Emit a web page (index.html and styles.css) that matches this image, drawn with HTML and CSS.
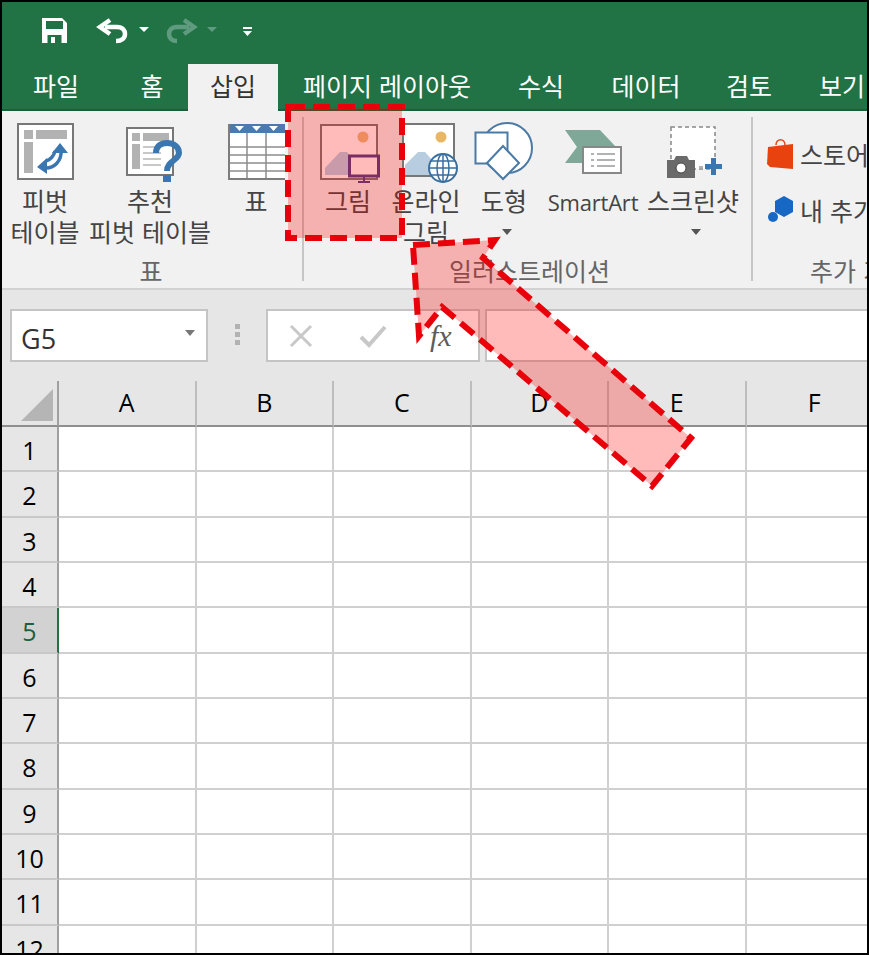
FILE: index.html
```html
<!DOCTYPE html>
<html lang="ko">
<head>
<meta charset="utf-8">
<title>Excel 삽입 탭</title>
<link rel="stylesheet" href="styles.css">
</head>
<body>
<div class="page">
<div class="frame">
  <div class="qat">
    <svg class="qat-icons" viewBox="2 2 300 62" width="300" height="62">
      <path d="M42 18H62L67 23V43H42Z" fill="#fff"/>
      <rect x="46" y="21" width="17" height="8" fill="#217346"/>
      <rect x="47.500" y="35" width="14" height="8" fill="#217346"/>
      <rect x="51" y="37" width="4" height="6" fill="#fff"/>
      <path d="M105 27H117C123 27 125 31 125 34C125 38 122 41 116 41" fill="none" stroke="#fff" stroke-width="4.500"/>
      <path d="M110 20L100 27L110 34" fill="none" stroke="#fff" stroke-width="4.500"/>
      <path d="M139 27H149L144 32Z" fill="#fff"/>
      <path d="M189 27H177C171 27 169 31 169 34C169 38 172 41 177 41" fill="none" stroke="#5f9b7e" stroke-width="4.500"/>
      <path d="M184 20L194 27L184 34" fill="none" stroke="#5f9b7e" stroke-width="4.500"/>
      <path d="M207 27H217L212 32Z" fill="#5f9b7e"/>
      <path d="M243 27H252V29H243ZM243 31H252L247.500 36Z" fill="#fff"/>
    </svg>
  </div>
  <div class="tabs">
    <div class="tab tab-file">파일</div>
    <div class="tab tab-home">홈</div>
    <div class="tab tab-insert">삽입</div>
    <div class="tab tab-layout">페이지 레이아웃</div>
    <div class="tab tab-formula">수식</div>
    <div class="tab tab-data">데이터</div>
    <div class="tab tab-review">검토</div>
    <div class="tab tab-view">보기</div>
  </div>
  <div class="ribbon">
    <div class="group group-table">
      <div class="btns">
        <div class="btn btn-pivot">
          <svg viewBox="10 120 70 64" width="70" height="64">
            <rect x="18" y="124" width="55" height="55" fill="#fff" stroke="#777" stroke-width="2"/>
            <path d="M24 130h9v9h-9zM36 130h31v9H36zM24 142h9v31h-9z" fill="#b2b2b2"/>
            <path d="M44 168C54 169 62 161 61 150M46 161C50 160 54 156 55 151" fill="none" stroke="#3a77b0" stroke-width="3.500"/>
            <path d="M52 153L60 143L68 153ZM47 158L37 167L47 174Z" fill="#3a77b0"/>
          </svg>
          <div class="label">피벗<br>테이블</div>
        </div>
        <div class="btn btn-rec">
          <svg viewBox="80 120 140 64" width="140" height="64">
            <rect x="127" y="128" width="46" height="47" fill="#fff" stroke="#777" stroke-width="2"/>
            <path d="M132 133h8v8h-8zM143 133h26v8h-26zM132 144h8v25h-8z" fill="#b2b2b2"/>
            <path d="M143 147h18M143 153h18M143 159h18M143 165h18" stroke="#c8c8c8" stroke-width="2"/>
            <path d="M156 153C156 146 161 143 167 143C174 143 179 147 179 153C179 160 167 161 167 171" fill="none" stroke="#3a77b0" stroke-width="6"/>
            <rect x="163" y="175" width="8" height="7" fill="#3a77b0"/>
          </svg>
          <div class="label">추천<br>피벗 테이블</div>
        </div>
        <div class="btn btn-tbl">
          <svg viewBox="220 120 72 64" width="72" height="64">
            <path d="M229 125H285V179H229Z" fill="#fff"/>
            <path d="M228 124h57v9h-57z" fill="#4a7ab0"/>
            <path d="M235 126h9l-4.500 5zM252 126h9l-4.500 5zM269 126h9l-4.500 5z" fill="#fff"/>
            <path d="M229 147h56M229 155h56M229 163h56M229 171h56M247 133v46M266 133v46" stroke="#8d8d8d" stroke-width="1.500"/>
            <path d="M285 179H229V124" fill="none" stroke="#7d7d7d" stroke-width="2"/>
          </svg>
          <div class="label">표</div>
        </div>
      </div>
      <div class="glabel glabel-table">표</div>
    </div>
    <div class="group group-illus">
      <div class="btns">
        <div class="btn btn-pic">
          <svg viewBox="308 120 80 64" width="80" height="64">
            <rect x="321" y="125" width="56" height="54" fill="#fff" stroke="#777" stroke-width="2"/>
            <circle cx="363" cy="137" r="5.500" fill="#e8c080"/>
            <path d="M325 175V168L340 152H347L359 167V175Z" fill="#b5d5ea"/>
            <rect x="349.500" y="156" width="29" height="20" fill="#fff" stroke="#4a3f8a" stroke-width="3"/>
            <path d="M364 177v4M358 182h12" stroke="#4a3f8a" stroke-width="2"/>
          </svg>
          <div class="label">그림</div>
        </div>
        <div class="btn btn-online">
          <svg viewBox="388 120 76 64" width="76" height="64">
            <rect x="403" y="124" width="51" height="52" fill="#fff" stroke="#777" stroke-width="2"/>
            <circle cx="441" cy="137" r="5.500" fill="#e8b765"/>
            <path d="M405 175V165L418 152H425L441 170V175Z" fill="#b8cde0"/>
            <circle cx="443" cy="168" r="14" fill="#fff" stroke="#3a6f9e" stroke-width="2"/>
            <ellipse cx="443" cy="168" rx="6" ry="14" fill="none" stroke="#3a6f9e" stroke-width="1.500"/>
            <path d="M443 154v28M429 168h28M431 161h24M431 175h24" stroke="#3a6f9e" stroke-width="1.500"/>
          </svg>
          <div class="label">온라인<br>그림</div>
        </div>
        <div class="btn btn-shape">
          <svg viewBox="464 120 80 64" width="80" height="64">
            <circle cx="507" cy="148" r="25" fill="#fff" stroke="#4a7aa5" stroke-width="2"/>
            <rect x="475.500" y="132.500" width="32" height="31" fill="#fff" stroke="#4a7aa5" stroke-width="2"/>
            <path d="M503 146L519 163L503 179L487 163Z" fill="#fff" stroke="#4a7aa5" stroke-width="2"/>
          </svg>
          <div class="label">도형</div>
          <div class="caret-line"><span class="caret"></span></div>
        </div>
        <div class="btn btn-smart">
          <svg viewBox="544 120 98 64" width="98" height="64">
            <path d="M565 130H600L616 147H583V163H565L577 147Z" fill="#7fa898"/>
            <rect x="583" y="147" width="38" height="26" fill="#fff" stroke="#888" stroke-width="2"/>
            <path d="M591 154h3M591 160h3M591 166h3M597 154h18M597 160h18M597 166h18" stroke="#999" stroke-width="1.500"/>
          </svg>
          <div class="label latin">SmartArt</div>
        </div>
        <div class="btn btn-shot">
          <svg viewBox="642 120 102 64" width="102" height="64">
            <rect x="671" y="127" width="44" height="42" fill="#fff" stroke="#888" stroke-width="1.500" stroke-dasharray="4 3"/>
            <path d="M667 160H674L676 156H687L689 160H695V178H667Z" fill="#6a6a6a"/>
            <circle cx="681" cy="168" r="5" fill="#fff" stroke="#444" stroke-width="1"/>
            <path d="M699 167h4" stroke="#999" stroke-width="1.500"/>
            <path d="M705 164h6v-6h5v6h6v5h-6v6h-5v-6h-6z" fill="#3a77b0"/>
          </svg>
          <div class="label">스크린샷</div>
          <div class="caret-line"><span class="caret"></span></div>
        </div>
      </div>
      <div class="glabel">일러스트레이션</div>
    </div>
    <div class="group group-addin">
      <div class="addin-list">
        <div class="addin">
          <svg viewBox="0 0 27 34" width="27" height="34">
            <path d="M9 8C9 1 18 1 18 8" fill="none" stroke="#e8430f" stroke-width="1.500"/>
            <path d="M1 10L26 7V32L3 30L0 27Z" fill="#e8430f"/>
          </svg>
          <span>스토어</span>
        </div>
        <div class="addin">
          <svg viewBox="0 0 27 34" width="27" height="34">
            <path d="M17 3L26 8V19L17 24L8 19V8Z" fill="#1668c4"/>
            <circle cx="6" cy="24" r="5" fill="#1668c4"/>
          </svg>
          <span>내 추가 기능</span>
        </div>
      </div>
      <div class="glabel glabel-addin">추가 기능</div>
    </div>
  </div>
  <div class="fbar">
    <div class="namebox"><span class="name">G5</span><i class="caret caret-name"></i></div>
    <div class="grip"><b></b><b></b><b></b></div>
    <div class="fbuttons">
      <svg class="fx-x" viewBox="0 0 26 26" width="26" height="26"><path d="M3 3L23 23M23 3L3 23" stroke="#c8c8c8" stroke-width="3"/></svg>
      <svg class="fx-ok" viewBox="0 0 28 26" width="28" height="26"><path d="M2 14L10 22L26 4" fill="none" stroke="#c8c8c8" stroke-width="4"/></svg>
      <span class="fx">fx</span>
    </div>
    <div class="finput"></div>
  </div>
  <div class="sheet">
    <div class="corner"><svg viewBox="0 0 32 32" width="32" height="32"><path d="M32 0V32H0Z" fill="#b5b5b5"/></svg></div>
    <div class="col">A</div><div class="col">B</div><div class="col">C</div><div class="col">D</div><div class="col">E</div><div class="col">F</div>
    <div class="row">1</div><i></i><i></i><i></i><i></i><i></i><i></i>
    <div class="row">2</div><i></i><i></i><i></i><i></i><i></i><i></i>
    <div class="row">3</div><i></i><i></i><i></i><i></i><i></i><i></i>
    <div class="row">4</div><i></i><i></i><i></i><i></i><i></i><i></i>
    <div class="row row-active">5</div><i></i><i></i><i></i><i></i><i></i><i></i>
    <div class="row">6</div><i></i><i></i><i></i><i></i><i></i><i></i>
    <div class="row">7</div><i></i><i></i><i></i><i></i><i></i><i></i>
    <div class="row">8</div><i></i><i></i><i></i><i></i><i></i><i></i>
    <div class="row">9</div><i></i><i></i><i></i><i></i><i></i><i></i>
    <div class="row">10</div><i></i><i></i><i></i><i></i><i></i><i></i>
    <div class="row">11</div><i></i><i></i><i></i><i></i><i></i><i></i>
    <div class="row">12</div><i></i><i></i><i></i><i></i><i></i><i></i>
  </div>
</div>
<svg class="annot" viewBox="0 0 869 955" width="869" height="955">
  <rect x="288" y="107" width="114" height="131" class="mark"/>
  <path d="M413 245L495 240L483 258L691 438L652 486L442 307L419 336Z" class="mark"/>
</svg>
</div>
</body>
</html>
```

FILE: styles.css
```css
* { box-sizing: border-box; }
html, body { margin: 0; padding: 0; background: #000; }
body { font-family: "Noto Sans CJK KR", "Open Sans", sans-serif; }
.page { position: relative; width: 869px; height: 955px; overflow: hidden; }
.frame {
  width: 869px; height: 955px; border: 2px solid #000;
  display: flex; flex-direction: column; overflow: hidden; background: #fff;
}
.qat { flex: none; height: 62px; background: #217346; }
.qat-icons { display: block; }

.tabs {
  flex: none; height: 47px; display: flex; background: #217346;
  border-bottom: 2px solid #1a5f3a; overflow: visible;
}
.tab {
  flex: none; height: 45px; color: #fff; font-size: 25px; line-height: 43px;
  text-align: center; white-space: nowrap;
}
.tab-file { width: 108px; }
.tab-home { width: 78px; padding-left: 6px; }
.tab-insert { width: 90px; height: 47px; background: #f1f1f1; color: #333; }
.tab-layout { width: 218px; }
.tab-formula { width: 90px; }
.tab-data { width: 120px; }
.tab-review { width: 86px; }
.tab-view { width: 100px; }

.ribbon {
  flex: none; height: 179px; display: flex; background: #f1f1f1;
  border-bottom: 2px solid #d2d2d2; padding-top: 6px; color: #444;
}
.group {
  flex: none; height: 164px; display: flex; flex-direction: column;
  border-right: 2px solid #c6c6c6;
}
.group-table { width: 302px; padding-left: 8px; }
.group-illus { width: 449px; padding-left: 4px; }
.group-addin { width: 166px; border-right: 0; padding-left: 14px; }
.btns { flex: 1; display: flex; min-height: 0; padding-top: 3px; }
.btn { flex: none; display: flex; flex-direction: column; align-items: center; }
.btn svg { display: block; flex: none; }
.btn-pivot { width: 70px; }
.btn-rec { width: 140px; }
.btn-tbl { width: 72px; }
.btn-pic { width: 80px; }
.btn-online { width: 76px; }
.btn-shape { width: 80px; }
.btn-smart { width: 98px; }
.btn-shot { width: 102px; }
.label {
  margin-top: 1px; font-size: 25px; line-height: 31px; text-align: center; white-space: nowrap;
}
.latin {
  font-family: "Open Sans", sans-serif; font-size: 22px; letter-spacing: -0.2px; padding-top: 2px;
}
.caret-line { height: 31px; display: flex; align-items: center; padding-left: 6px; }
.caret {
  display: block; width: 0; height: 0;
  border-left: 5.500px solid transparent; border-right: 5.500px solid transparent;
  border-top: 6px solid #555;
}
.glabel {
  flex: none; height: 22px; line-height: 22px; font-size: 25px; color: #666;
  text-align: center; white-space: nowrap;
}
.glabel-table { padding-right: 10px; }
.glabel-addin { text-align: left; padding-left: 43px; }
.addin-list {
  flex: 1; display: flex; flex-direction: column; gap: 22px; padding-top: 20px; min-height: 0;
}
.addin { display: flex; align-items: center; gap: 6px; height: 34px; font-size: 25px; white-space: nowrap; }
.addin svg { flex: none; }

.fbar {
  flex: none; height: 91px; background: #e6e6e6; display: flex; align-items: flex-start;
  padding: 19px 0 0 8px;
}
.namebox {
  flex: none; width: 198px; height: 53px; background: #fff; border: 2px solid #c4c4c4;
  display: flex; align-items: center; justify-content: space-between;
  padding: 0 11px 0 9px; font: 27px "Open Sans", sans-serif; color: #333;
}
.name { position: relative; top: 3px; }
.caret-name { margin-top: -6px; border-top-color: #777; }
.grip {
  flex: none; width: 58px; height: 53px; display: flex; flex-direction: column;
  align-items: center; justify-content: center; gap: 3px; padding-bottom: 3px;
}
.grip b { display: block; width: 5px; height: 5px; background: #b2b2b2; }
.fbuttons {
  flex: none; width: 214px; height: 53px; background: #fff; border: 2px solid #c4c4c4;
  display: flex; align-items: center; padding-left: 20px;
}
.fx-x { flex: none; }
.fx-ok { flex: none; margin-left: 45px; }
.fx {
  margin-left: 43px; font: italic 30px "Liberation Serif", serif; color: #5c5c5c; line-height: 50px;
}
.finput {
  flex: none; width: 400px; height: 53px; margin-left: 5px; background: #fff; border: 2px solid #c4c4c4;
}

.sheet {
  flex: 1; min-height: 0; display: grid; overflow: hidden;
  grid-template-columns: 57px repeat(6, 137.500px);
  grid-template-rows: 46px repeat(12, 45.330px);
  background: #fff;
}
.corner {
  background: #e6e6e6; border-right: 2px solid #a0a0a0; border-bottom: 2px solid #8f8f8f;
  padding: 8px 0 0 19px;
}
.corner svg { display: block; }
.col {
  background: #e6e6e6; border-right: 2px solid #bdbdbd; border-bottom: 2px solid #8f8f8f;
  font: 25px/42px "Open Sans", sans-serif; color: #000; text-align: center;
}
.row {
  background: #e6e6e6; border-right: 2px solid #a0a0a0; border-bottom: 2px solid #c8c8c8;
  font: 25px/46px "Open Sans", sans-serif; color: #000; text-align: center;
}
.row-active { background: #d2d2d2; color: #1c5f42; border-right-color: #217346; }
.sheet i { display: block; border-right: 2px solid #d0d0d0; border-bottom: 2px solid #d0d0d0; }

.annot { position: absolute; left: 0; top: 0; pointer-events: none; }
.mark {
  fill: rgba(255, 0, 0, 0.27); stroke: #e8000b; stroke-width: 6; stroke-dasharray: 17 8;
}
```
